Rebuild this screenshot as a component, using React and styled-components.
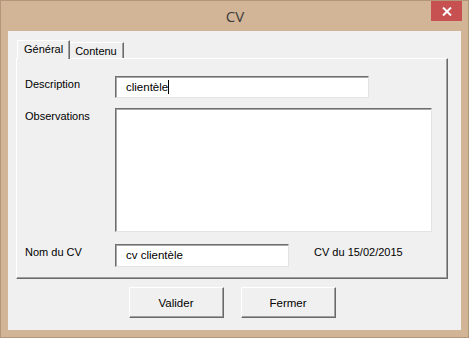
import styled, { createGlobalStyle } from "styled-components";

const GlobalStyle = createGlobalStyle`
  html, body {
    margin: 0;
    padding: 0;
    background: #d2b496;
  }
  * {
    box-sizing: border-box;
  }
`;

const Window = styled.div`
  width: 469px;
  height: 338px;
  background-color: #d2b496;
  border: 1px solid #b3967a;
  display: flex;
  flex-direction: column;
  font-family: "Liberation Sans", Arial, sans-serif;
  font-size: 11px;
  color: #000;
`;

const TitleBar = styled.div`
  height: 30px;
  display: grid;
  grid-template-columns: 1fr auto 1fr;
  padding: 0 6px 0 7px;
`;

const Title = styled.div`
  grid-column: 2;
  font-family: "Open Sans", "Noto Sans", sans-serif;
  font-size: 15px;
  color: #3c3c3c;
  line-height: 30px;
`;

const CloseButton = styled.div`
  justify-self: end;
  width: 31px;
  height: 20px;
  background-color: #c75050;
  color: #fff;
  display: flex;
  align-items: center;
  justify-content: center;
`;

const Client = styled.div`
  flex: 1;
  margin: 0 7px 7px 7px;
  background-color: #f0f0f0;
  padding: 9px 13px 0 8px;
  display: flex;
  flex-direction: column;
`;

const TabStrip = styled.div`
  display: flex;
  align-items: flex-end;
  height: 18px;
  padding-left: 1px;
  position: relative;
  z-index: 1;
`;

const Tab = styled.div`
  height: ${(p) => (p.$active ? "19px" : "16px")};
  margin-bottom: ${(p) => (p.$active ? "-1px" : "0")};
  padding: ${(p) => (p.$active ? "0 6px" : "0 6px 0 5px")};
  line-height: ${(p) => (p.$active ? "17px" : "16px")};
  background-color: #f0f0f0;
  border-top: 1px solid #fff;
  border-left: ${(p) => (p.$active ? "1px solid #fff" : "none")};
  border-right: 1px solid #696969;
  box-shadow: inset -1px 0 0 #a0a0a0;
  font-size: 11px;
`;

const Panel = styled.div`
  height: 221px;
  border-top: 1px solid #fff;
  border-left: 1px solid #fff;
  border-right: 1px solid #696969;
  border-bottom: 1px solid #696969;
  box-shadow: inset -1px -1px 0 #a0a0a0;
  padding: 17px 0 0 8px;
  display: flex;
  flex-direction: column;
`;

const Row = styled.div`
  display: flex;
  align-items: flex-start;
  margin-top: ${(p) => p.$gap || 0}px;
`;

const Label = styled.div`
  width: 90px;
  line-height: 14px;
  padding-top: 1px;
  font-size: 11px;
`;

const Field = styled.div`
  width: ${(p) => p.$w}px;
  height: ${(p) => p.$h}px;
  background-color: #fff;
  border-top: 1px solid #6e6e6e;
  border-left: 1px solid #6e6e6e;
  border-right: 1px solid #e3e3e3;
  border-bottom: 1px solid #e3e3e3;
  box-shadow: inset 1px 1px 0 #a9a9a9;
  padding: 0 0 0 10px;
  line-height: 21px;
  font-size: 11.5px;
  white-space: nowrap;
`;

const Caret = styled.span`
  display: inline-block;
  width: 1px;
  height: 14px;
  background-color: #000;
  vertical-align: -3px;
`;

const DateText = styled.div`
  margin-left: 25px;
  line-height: 14px;
  padding-top: 1px;
`;

const Footer = styled.div`
  display: flex;
  justify-content: center;
  gap: 17px;
  margin-top: 8px;
`;

const Button = styled.div`
  width: 95px;
  height: 31px;
  background-color: #f0f0f0;
  border-top: 1px solid #fff;
  border-left: 1px solid #fff;
  border-right: 1px solid #696969;
  border-bottom: 1px solid #696969;
  box-shadow: inset -1px -1px 0 #a0a0a0;
  display: flex;
  align-items: center;
  justify-content: center;
  font-size: 11.5px;
`;

function CloseIcon() {
  return (
    <svg width="10" height="9" viewBox="0 0 10 9">
      <path d="M1 0.5 L9 8.5 M9 0.5 L1 8.5" stroke="#fff" strokeWidth="2" />
    </svg>
  );
}

export default function App() {
  return (
    <>
      <GlobalStyle />
      <Window>
        <TitleBar>
          <Title>CV</Title>
          <CloseButton>
            <CloseIcon />
          </CloseButton>
        </TitleBar>
        <Client>
          <TabStrip>
            <Tab $active>Général</Tab>
            <Tab>Contenu</Tab>
          </TabStrip>
          <Panel>
            <Row>
              <Label>Description</Label>
              <Field $w={254} $h={22}>
                clientèle
                <Caret />
              </Field>
            </Row>
            <Row $gap={10}>
              <Label>Observations</Label>
              <Field $w={317} $h={124} />
            </Row>
            <Row $gap={12}>
              <Label>Nom du CV</Label>
              <Field $w={174} $h={23}>
                cv clientèle
              </Field>
              <DateText>CV du 15/02/2015</DateText>
            </Row>
          </Panel>
          <Footer>
            <Button>Valider</Button>
            <Button>Fermer</Button>
          </Footer>
        </Client>
      </Window>
    </>
  );
}
